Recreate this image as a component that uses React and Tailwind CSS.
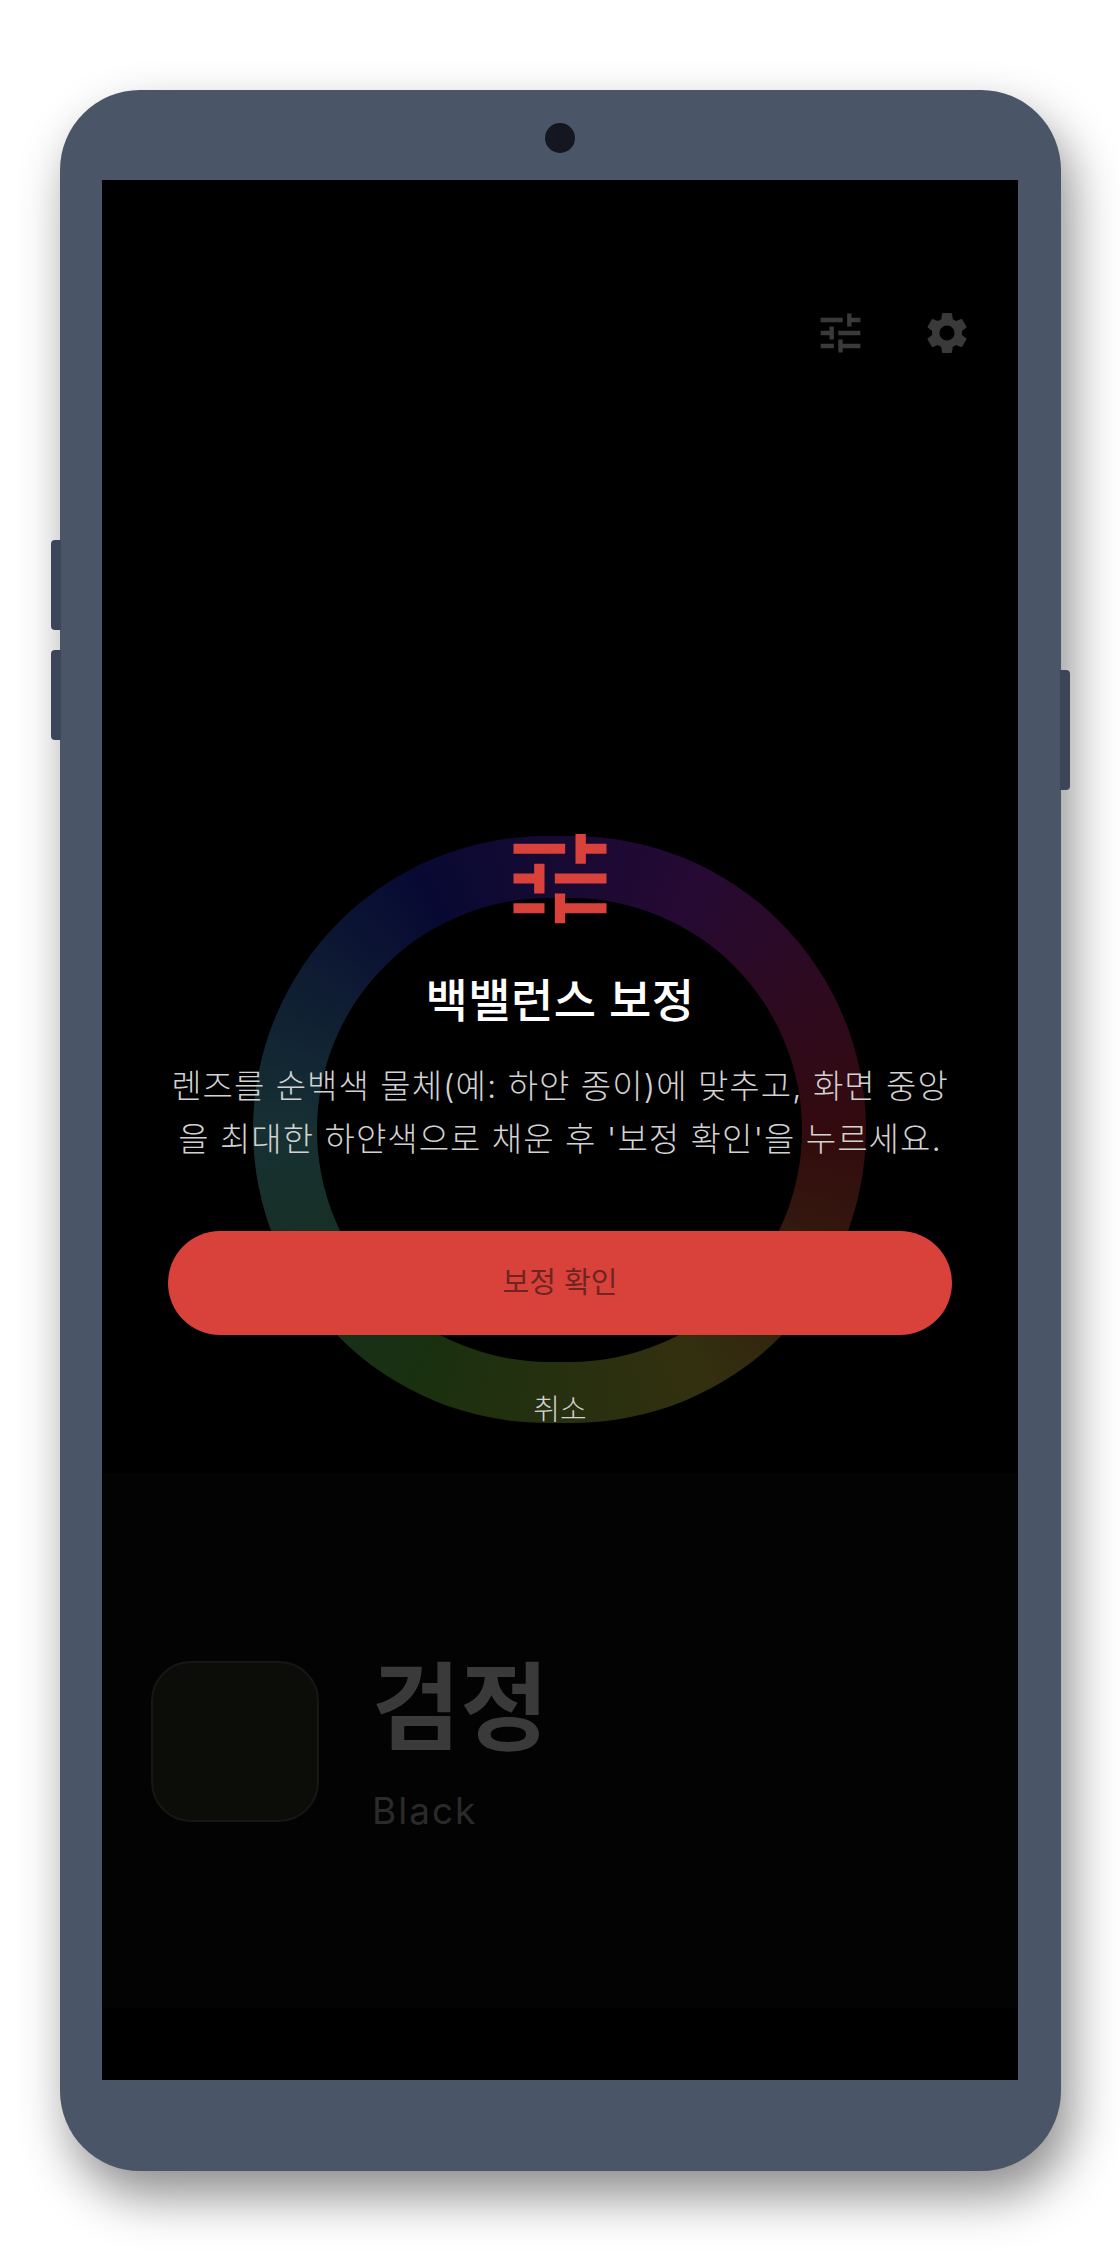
const font = "font-['Inter','Noto_Sans_CJK_KR',sans-serif]"

function TuneIcon({ className }) {
  return (
    <svg viewBox="0 0 24 24" preserveAspectRatio="none" fill="currentColor" className={className}>
      <path d="M3 17v2h6v-2H3zM3 5v2h10V5H3zm10 16v-2h8v-2h-8v-2h-2v6h2zM7 9v2H3v2h4v2h2V9H7zm14 4v-2H11v2h10zm-6-4h2V7h4V5h-4V3h-2v6z" />
    </svg>
  )
}

function GearIcon({ className }) {
  return (
    <svg viewBox="0 0 24 24" fill="currentColor" className={className}>
      <path d="M19.14 12.94c.04-.3.06-.61.06-.94 0-.32-.02-.64-.07-.94l2.03-1.58c.18-.14.23-.41.12-.61l-1.92-3.32c-.12-.22-.37-.29-.59-.22l-2.39.96c-.5-.38-1.03-.7-1.62-.94l-.36-2.54c-.04-.24-.24-.41-.48-.41h-3.84c-.24 0-.43.17-.47.41l-.36 2.54c-.59.24-1.13.57-1.62.94l-2.39-.96c-.22-.08-.47 0-.59.22L2.74 8.87c-.12.21-.08.47.12.61l2.03 1.58c-.05.3-.09.63-.09.94s.02.64.07.94l-2.03 1.58c-.18.14-.23.41-.12.61l1.92 3.32c.12.22.37.29.59.22l2.39-.96c.5.38 1.03.7 1.62.94l.36 2.54c.05.24.24.41.48.41h3.84c.24 0 .44-.17.47-.41l.36-2.54c.59-.24 1.13-.56 1.62-.94l2.39.96c.22.08.47 0 .59-.22l1.92-3.32c.12-.22.07-.47-.12-.61l-2.01-1.58zM12 15.6c-1.98 0-3.6-1.62-3.6-3.6s1.62-3.6 3.6-3.6 3.6 1.62 3.6 3.6-1.62 3.6-3.6 3.6z" />
    </svg>
  )
}

function CalibrationModal() {
  return (
    <div className="absolute inset-0 flex flex-col items-center pt-[639px]">
      {/* color ring behind the dialog */}
      <div className="absolute left-[151px] top-[656px] w-[613px] h-[587px] rounded-full opacity-20 bg-[conic-gradient(from_90deg,#ff3344,#fff04d,#7ff04d,#6ef0ff,#2530ff,#c030ff,#ff3344)]"></div>
      <div className="absolute left-[215px] top-[718px] w-[485px] h-[464px] rounded-full bg-black"></div>

      <TuneIcon className="relative w-[124px] h-[119px] text-[#d9423b]" />
      <div className="relative mt-[32px] text-[46px] leading-[60px] tracking-[0.4px] font-medium text-white">백밸런스 보정</div>
      <div className="relative mt-[30px] text-[33px] leading-[53px] tracking-[1.05px] font-light text-center text-[#d2d2d2] whitespace-nowrap">
        렌즈를 순백색 물체(예: 하얀 종이)에 맞추고, 화면 중앙<br />
        을 최대한 하얀색으로 채운 후 '보정 확인'을 누르세요.
      </div>
      <button className="relative mt-[65px] w-[784px] h-[104px] rounded-full bg-[#d9423b] text-[29px] text-[#702422]">보정 확인</button>
      <button className="relative mt-[55px] h-[40px] text-[29px] leading-[40px] font-light text-[#d2d2d2]">취소</button>
    </div>
  )
}

export default function App() {
  return (
    <div className={`w-[1120px] h-[2260px] bg-white pt-[90px] pl-[60px] overflow-hidden ${font}`}>
      <div className="relative w-[1001px] h-[2081px] px-[42px] py-[90px] rounded-[80px] bg-[#4a5568] shadow-[10px_25px_50px_rgba(0,0,0,0.45)]">
        {/* side buttons */}
        <div className="absolute left-[-9px] top-[450px] w-[10px] h-[90px] rounded-l-[4px] bg-[#3d4658]"></div>
        <div className="absolute left-[-9px] top-[560px] w-[10px] h-[90px] rounded-l-[4px] bg-[#3d4658]"></div>
        <div className="absolute right-[-9px] top-[580px] w-[10px] h-[120px] rounded-r-[4px] bg-[#3d4658]"></div>
        {/* camera */}
        <div className="absolute left-[485px] top-[33px] w-[30px] h-[30px] rounded-full bg-[#14171f]"></div>

        <div className="relative w-[916px] h-[1900px] bg-black overflow-hidden flex flex-col">
          <div className="flex justify-end items-center gap-[55px] h-[105px] mt-[100px] pr-[46px] text-[#3a3a3a]">
            <TuneIcon className="w-[53px] h-[52px]" />
            <GearIcon className="w-[50px] h-[50px]" />
          </div>
          <div className="mt-[1088px] h-[535px] bg-[#030303] flex items-center gap-[53px] pl-[49px]">
            <div className="w-[168px] h-[161px] mt-[2px] rounded-[40px] bg-[#0c0c08] border-2 border-[#171715]"></div>
            <div className="flex flex-col mt-[7px]">
              <div className="text-[96px] leading-[110px] font-bold text-[#3a3a3a]">검정</div>
              <div className="mt-[24px] text-[37px] leading-[50px] tracking-[2px] text-[#2a2a2a]">Black</div>
            </div>
          </div>
          <CalibrationModal />
        </div>
      </div>
    </div>
  )
}
